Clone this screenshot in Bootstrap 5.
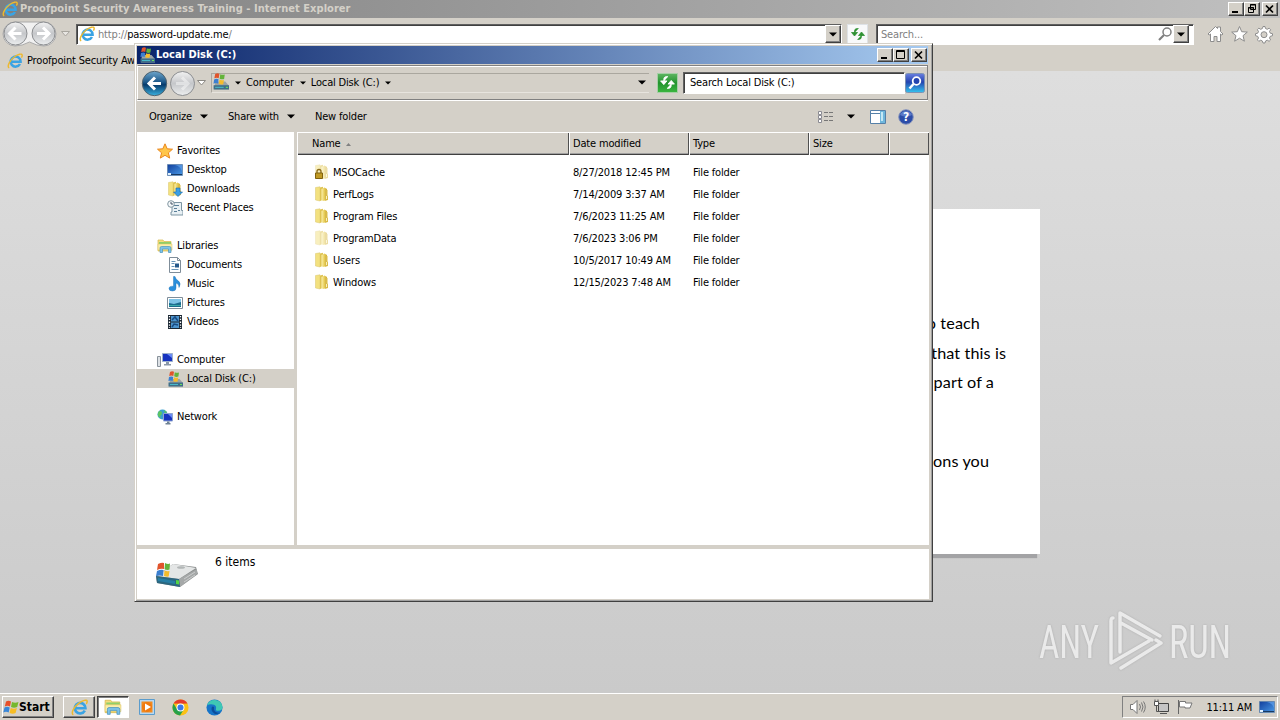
<!DOCTYPE html>
<html lang="en">
<head>
  <meta charset="UTF-8">
  <title>Proofpoint Security Awareness Training</title>
  <link href="https://cdn.jsdelivr.net/npm/bootstrap@5.3.0/dist/css/bootstrap.min.css" rel="stylesheet">
  <style>
    body { font: 11px/14px "DejaVu Sans Condensed", "DejaVu Sans", sans-serif; font-stretch: condensed; letter-spacing: -.17px; color: #000; background: #d4d0c8; height: 720px; white-space: nowrap; }
    svg { flex: none; display: block; }
    .face { background: #d4d0c8; }
    .txt-b { font-weight: bold; letter-spacing: 0; }

    /* classic 3D edges */
    .btn3d { background: #d4d0c8; border: 1px solid; border-color: #fff #404040 #404040 #fff; box-shadow: inset -1px -1px #808080; flex: none; }
    .well { background: #fff; border: 1px solid; border-color: #606060 #fff #fff #606060; box-shadow: inset 1px 1px #404040; }
    .cap { width: 16px; height: 14px; }

    /* browser */
    .ie-title { height: 18px; background: linear-gradient(90deg, #808080, #c0c0c0); color: #d4d0c8; padding-left: 2px; padding-right: 2px; }
    .ie-title .txt-b { margin-left: 2px; letter-spacing: .04px; }
    .ie-nav { height: 32px; padding-left: 2px; }
    .ie-nav span, .ie-tabs span { padding-top: 1px; }
    .ie-nav span span { padding: 0; }
    .ie-address { width: 766px; height: 21px; margin-left: 6px; }
    .ie-search { width: 318px; height: 21px; margin-left: 8px; }
    .ie-tabs { height: 21px; padding-left: 7px; }
    .ie-tabs span { width: 107px; overflow: hidden; }
    .gray { color: #808080; }
    .page-area { background: linear-gradient(#dedede, #cacaca); padding-top: 138px; }
    .lesson { width: 800px; height: 345px; background: #fff; box-shadow: -3px 4px 1px #a3a3a5; font: 16.200px/29.500px Lato, sans-serif; letter-spacing: .1px; padding: 99px 34px 0 0; }
    .lesson .l1 { margin-right: 26px; }
    .lesson .l3 { margin-right: 12px; }
    .lesson .l4 { margin-right: 17px; margin-top: 49.500px; }

    /* explorer window */
    .win { left: 134px; top: 43px; width: 799px; height: 559px; border: 1px solid; border-color: #d4d0c8 #404040 #404040 #d4d0c8; box-shadow: inset 1px 1px #fff, inset -1px -1px #a0a0a0; padding: 2px 3px 2px 2px; }
    .win-title { height: 18px; background: linear-gradient(90deg, #0a246a, #a6caf0); color: #fff; margin-right: 1px; padding: 0 1px 0 2px; }
    .win-nav { height: 35px; margin-top: 1px; margin-right: 1px; border: 1px solid; border-color: #808080 #808080 #808080 #fff; box-shadow: inset 0 1px #fff, 0 1px #fff; padding-left: 3px; }
    .crumbs { width: 438px; height: 20px; border: 1px solid #aaa79f; border-right: 0; border-bottom-color: #e7e4de; margin-left: 5px; }
    .go { width: 21px; height: 20px; margin-left: 8px; background: linear-gradient(#5cb45f, #22932d 50%, #3bb53f); border: 1px solid #a5cfa5; flex: none; }
    .win-search { width: 222px; height: 22px; margin-left: 5px; padding-left: 6px; flex: none; }
    .win-tools { height: 32px; padding: 1px 0 0 12px; }
    .win-main { height: 413px; }
    .side { width: 157px; background: #fff; padding-top: 9px; margin-right: 3px; flex: none; }
    .side .r { height: 19px; display: flex; align-items: center; gap: 4px; padding: 1px 0 0 20px; }
    .side .r svg { margin-top: -1px; }
    .side .s { padding-left: 30px; }
    .files { background: #fff; }
    .cols, .f-row { display: grid; grid-template-columns: 272px 120px 120px 80px 1fr; }
    .cols { height: 23px; margin-bottom: 6px; background: #d4d0c8; border-top: 1px solid #fff; border-bottom: 1px solid #404040; box-shadow: inset 0 -1px #a0a0a0; line-height: 22px; }
    .cols div { border-left: 1px solid #fff; border-right: 1px solid #505050; padding-left: 3px; }
    .cols div:first-child { padding-left: 14px; }
    .f-row { height: 22px; align-items: center; padding-top: 1px; }
    .f-row div { padding-left: 4px; }
    .f-row div:first-child { padding-left: 17px; display: flex; align-items: center; gap: 3px; }
    .f-row svg { margin-top: -2px; }
    .dim { opacity: .5; }
    .details { height: 50px; background: #fff; margin-top: 4px; padding-left: 17px; font-size: 12px; letter-spacing: 0; }

    /* taskbar */
    .task { height: 27px; border-top: 1px solid #fff; padding: 0 2px; }
    .start { width: 52px; height: 22px; }
    .tb { width: 32px; height: 22px; }
    .tb-down { background: #fff; border-color: #404040 #fff #fff #404040; box-shadow: inset 1px 1px #808080; }
    .tray { height: 22px; border: 1px solid; border-color: #808080 #fff #fff #808080; padding: 0 2px 0 6px; }
    .wm { left: 1036px; top: 606px; opacity: .6; filter: drop-shadow(0 0 1px #999); }
  </style>
</head>
<body class="d-flex flex-column overflow-hidden position-relative">

  <svg width="0" height="0" class="position-absolute">
    <defs>
      <linearGradient id="gFold" x1="0" x2="1"><stop offset="0" stop-color="#fbf0ac"/><stop offset=".55" stop-color="#e6cb55"/><stop offset="1" stop-color="#cfab32"/></linearGradient>
      <linearGradient id="gBlue" x1="0" y1="0" x2="0" y2="1"><stop offset="0" stop-color="#6da6cc"/><stop offset=".45" stop-color="#1c5788"/><stop offset=".55" stop-color="#073b6b"/><stop offset="1" stop-color="#39b1e0"/></linearGradient>
      <linearGradient id="gGray" x1="0" y1="0" x2="0" y2="1"><stop offset="0" stop-color="#f2f2f2"/><stop offset=".5" stop-color="#c5c7ca"/><stop offset="1" stop-color="#eceeef"/></linearGradient>
      <linearGradient id="gScr" x1="0" y1="0" x2="1" y2="1"><stop offset="0" stop-color="#123f9c"/><stop offset="1" stop-color="#4a9be8"/></linearGradient>
      <linearGradient id="gSearch" x1="0" y1="0" x2="0" y2="1"><stop offset="0" stop-color="#6a7fe0"/><stop offset=".45" stop-color="#2444b0"/><stop offset="1" stop-color="#35c4ee"/></linearGradient>
    </defs>
    <symbol id="ie" viewBox="0 0 16 16">
      <path d="M13 11A5 5 0 1 1 13.600 8.700H4.500" fill="none" stroke="#3aa3e3" stroke-width="2.500"/>
      <path d="M2.200 14.900C-.6 13.600 3 7 7.500 3.800 11 1.200 15 .2 15.200 2.200c.1 1-.4 1.900-.8 2.500" fill="none" stroke="#edb92e" stroke-width="1.400"/>
    </symbol>
    <symbol id="flag" viewBox="0 0 16 16">
      <path d="M3 2.500Q5.500 1 8 2.500L7 7.500Q4.500 6 1.800 7.500z" fill="#e8502a"/>
      <path d="M9 3q3 1.500 6.500 0l-1.300 5Q11 9.500 8 8z" fill="#75b82d"/>
      <path d="M1.500 8.500Q4 7 6.700 8.500l-1 5Q3 12 .3 13.500z" fill="#3a87d8"/>
      <path d="M7.700 9q3 1.500 6.200.1l-1.300 5q-3 1.400-6-.1z" fill="#f7bd24"/>
    </symbol>
    <symbol id="disk" viewBox="0 0 16 16">
      <path d="M3 8h9.500L16 12v3.500H2z" fill="#9aa3a6"/><path d="M1.500 11.500H16v4H1.500z" fill="#3f6f88"/><path d="M3 13.500h8" stroke="#49b9c9"/><path d="M13 13.500h2" stroke="#6be05a"/>
      <path d="M3 1q2-1.200 4-.2L6.300 5Q4.500 4 2.200 5z" fill="#e0542c"/><path d="M7.800 1.200q2 1 4.200.2l-.6 4.200Q9 6.300 7.200 5.300z" fill="#63b33b"/><path d="M2 6q2.200-1 4.200-.1l-.6 4Q3.600 9 1.400 10z" fill="#3b7fd0"/><path d="M7 6.200q2 1 4.200.3l-.6 4Q8.300 11.300 6.400 10.200z" fill="#f4bb2c"/>
    </symbol>
    <symbol id="fold" viewBox="0 0 16 16">
      <path d="M1.500 1.500L6 .8V15l-4.500-1z" fill="#f3e17f" stroke="#d8c56c" stroke-width=".5"/><path d="M6 1.500L9 .8v13L6 15z" fill="#dfc352"/><path d="M7.500 3l3-1.500L13 3v11l-4 1-1.500-1z" fill="url(#gFold)"/><path d="M11 3.500l2.500.5v5.500l.5.500v4l-3 .800z" fill="#d9bb4a"/><path d="M12.500 10v3" stroke="#f9f0bd"/>
    </symbol>
    <symbol id="lib" viewBox="0 0 16 16">
      <path d="M1 2h5l1 1.500h7V13H1z" fill="#f4dd7e" stroke="#d6b74c" stroke-width=".7"/><path d="M2 4h12v2H2z" fill="#8fcf6a"/><path d="M1 6h14v6H1z" fill="#fbeea9" stroke="#dcc05c" stroke-width=".5"/>
      <path d="M3 14.500V10q0-1.500 1.500-1.500h8Q14 8.500 14 10v4.500h-2.500V11h-6v3.500z" fill="#7dc3e8" stroke="#4a93bd" stroke-width=".7"/>
    </symbol>
    <symbol id="screen" viewBox="0 0 16 16">
      <path d="M.5 2.500h15v11H.5z" fill="url(#gScr)" stroke="#5c7fa8" stroke-width=".7"/><path d="M8 3q5 1 7 6V3z" fill="#6aaaf0" opacity=".6"/><path d="M1 12.500h14" stroke="#173a63"/><path d="M1 11h3v2H1z" fill="#dff0ff"/>
    </symbol>
    <symbol id="note" viewBox="0 0 16 16">
      <path d="M8 .5q.5 3 3.500 4.500 3 2.500.5 6.500.3-3.500-3-4.500V12q0 3-3.500 3T2 12.500Q2 10 6.500 10.200V.5z" fill="#2b8fdc" stroke="#1769ae" stroke-width=".4"/>
    </symbol>
    <symbol id="max" viewBox="0 0 14 12"><path d="M2.500 1.500h8v8h-8zM2 2.500h9" fill="none" stroke="#000"/></symbol>
    <symbol id="x" viewBox="0 0 14 12"><path d="M3 2.500l7 7M10 2.500l-7 7" stroke="#000" stroke-width="1.700"/></symbol>
    <symbol id="min" viewBox="0 0 14 12"><path d="M3 9h6" stroke="#000" stroke-width="2"/></symbol>
    <symbol id="down" viewBox="0 0 8 5"><path d="M0 .5h8l-4 4z"/></symbol>
    <symbol id="left" viewBox="0 0 26 26"><path d="M13.500 7l-6 6 6 6M8 13h11.500" fill="none" stroke="#fff" stroke-width="3"/></symbol>
    <symbol id="right" viewBox="0 0 26 26"><path d="M12.500 7l6 6-6 6M18 13H6.500" fill="none" stroke="#fff" stroke-width="3"/></symbol>
    <symbol id="swap" viewBox="0 0 16 16"><path d="M8.500 2.500Q4.500 2 4.500 5v2M1.500 6.500h6l-3 3.500zM7.500 13.500q4 .5 4-3V9M8.500 9.500h6l-3-3.500z" fill="currentColor" stroke="currentColor" stroke-width=".8"/></symbol>
  </svg>

  <!-- browser caption -->
  <div class="ie-title d-flex align-items-center">
    <svg width="16" height="16"><use href="#ie"/></svg>
    <span class="txt-b"><svg width="0" height="0"></svg>Proofpoint Security Awareness Training - Internet Explorer</span>
    <div class="d-flex ms-auto">
      <div class="btn3d cap"><svg width="14" height="12"><use href="#min"/></svg></div>
      <div class="btn3d cap"><svg width="14" height="12"><path d="M5.500 1.500h5v5h-5zM3.500 4.500h5v5h-5zM5 2h6M3 5h6" fill="#d4d0c8" stroke="#000"/></svg></div>
      <div class="btn3d cap" style="margin-left:2px"><svg width="14" height="12"><use href="#x"/></svg></div>
    </div>
  </div>

  <!-- address bar -->
  <div class="ie-nav face d-flex align-items-center">
    <svg width="55" height="28" viewBox="0 0 55 28">
      <path d="M13 2h29a12 12 0 0 1 0 24q-7 0-14.500-4Q20 26 13 26a12 12 0 0 1 0-24" fill="#f1f1f1" stroke="#aaa"/>
      <circle cx="13.500" cy="13.500" r="11.500" fill="url(#gGray)" stroke="#8b8d90"/><circle cx="41.500" cy="13.500" r="11.500" fill="url(#gGray)" stroke="#8b8d90"/>
      <use href="#left" x="0" y="0.500" width="26" height="26"/><use href="#right" x="28.500" y="0.500" width="26" height="26"/>
    </svg>
    <svg width="9" height="6" class="ms-1"><path d="M.5.500h8l-4 4.500z" fill="#e8e6e2" stroke="#a9a69f"/></svg>
    <div class="ie-address well d-flex align-items-center">
      <svg width="16" height="16" style="margin:0 3px 0 2px"><use href="#ie"/></svg>
      <span><span class="gray">http://</span>password-update.me<span class="gray">/</span></span>
      <div class="btn3d ms-auto d-flex align-items-center justify-content-center" style="width:16px;height:18px"><svg width="8" height="5"><use href="#down"/></svg></div>
    </div>
    <div class="d-flex align-items-center justify-content-center border bg-light" style="width:21px;height:20px;margin-left:5px;color:#2f9233"><svg width="16" height="16"><use href="#swap"/></svg></div>
    <div class="ie-search well d-flex align-items-center">
      <span class="gray ms-1">Search...</span>
      <svg width="16" height="16" class="ms-auto"><circle cx="10" cy="6" r="4" fill="none" stroke="#808080" stroke-width="1.500"/><path d="M7 9l-5 5" stroke="#808080" stroke-width="2.200"/></svg>
      <div class="btn3d d-flex align-items-center justify-content-center me-1" style="width:16px;height:18px"><svg width="8" height="5"><use href="#down"/></svg></div>
    </div>
    <svg width="68" height="20" viewBox="0 0 68 20" style="margin-left:13px">
      <g fill="#fff" stroke="#8d8d8d">
        <path d="M1 10l7.500-7.500L10.500 4.500V3h3v4.500L16 10l-1.200 1-1.300-1v7.500h-3.500v-5H7v5H3.500V10l-1.300 1z"/>
        <path d="M32.500 2.500l2.200 5.200 5.600.4-4.300 3.600 1.400 5.500-4.900-3-4.900 3 1.400-5.500-4.300-3.600 5.600-.4z"/>
        <path d="M56 2.500h2l.5 2 1.800.8 1.800-1.100 1.500 1.500L62.500 7.500l.8 1.700 2.200.5v2l-2.200.6-.8 1.700 1.100 1.900-1.500 1.400-1.800-1.100-1.800.8-.5 2h-2l-.6-2-1.700-.8-1.900 1.100-1.400-1.400L51.500 14l-.8-1.700-2.200-.6v-2l2.200-.5.8-1.700-1.100-1.800 1.400-1.500L53.700 5.300l1.700-.8z"/><circle cx="57" cy="10.700" r="3" fill="#d4d0c8"/>
      </g>
    </svg>
  </div>

  <div class="ie-tabs face d-flex align-items-center">
    <svg width="16" height="16" style="margin-right:4px"><use href="#ie"/></svg>
    <span>Proofpoint Security Aw</span>
  </div>

  <!-- web page behind the window -->
  <div class="page-area flex-grow-1 overflow-hidden">
    <div class="lesson mx-auto text-end">
      <div class="l1">to teach</div>
      <div>that this is</div>
      <div class="l3">part of a</div>
      <div class="l4">actions you</div>
    </div>
  </div>

  <!-- taskbar -->
  <div class="task face d-flex align-items-center">
    <div class="btn3d start d-flex align-items-center"><svg width="16" height="16"><use href="#flag"/></svg><span class="txt-b" style="font-size:12px">Start</span></div>
    <div class="btn3d tb d-flex align-items-center justify-content-center" style="margin-left:9px"><svg width="17" height="17"><use href="#ie"/></svg></div>
    <div class="btn3d tb tb-down d-flex align-items-center justify-content-center" style="margin-left:2px"><svg width="18" height="18"><use href="#lib"/></svg></div>
    <svg width="16" height="16" style="margin-left:10px"><path d="M.5.500h15v15H.5z" fill="#b7d8f2" stroke="#5b9ccc"/><path d="M2.500 2.500h11v11h-11z" fill="#f38b1f"/><circle cx="8" cy="8" r="5" fill="#f07a10"/><path d="M6 4.500l6 3.500-6 3.500z" fill="#fff"/></svg>
    <svg width="17" height="17" viewBox="0 0 18 18" style="margin-left:17px"><circle cx="9" cy="9" r="8.500" fill="#fbc116"/><path d="M1.600 4.800A8.500 8.500 0 0 1 16.400 4.800L9 5z" fill="#e33b2e"/><path d="M1.600 4.800A8.500 8.500 0 0 0 8.500 17.500L12.500 11 5.500 11z" fill="#26a14b"/><circle cx="9" cy="9" r="4.200" fill="#fff"/><circle cx="9" cy="9" r="3.200" fill="#3a79e8"/></svg>
    <svg width="17" height="17" viewBox="0 0 18 18" style="margin-left:17px"><circle cx="9" cy="9" r="8.500" fill="#1674c8"/><path d="M1 7A8.500 8.500 0 0 1 17.500 8.500q0 4-4.500 4-3 0-2.500-2 1-3-2-4.500Q4 4.500 1 7z" fill="#3fc8b4"/><path d="M6 9q-1 4 3 6.500 3 1 6-1-3 .5-5-1t-1.500-5Q7 7 6 9" fill="#0c4d9a"/></svg>
    <div class="tray d-flex align-items-center ms-auto">
      <svg width="17" height="16"><path d="M1.500 5.500H4l4-4v13l-4-4H1.500z" fill="#fff" stroke="#777"/><path d="M10.500 5q2 3 0 6M12.500 3.500q3 4.500 0 9M14.500 2.500q3.500 5.500 0 11" fill="none" stroke="#777"/></svg>
      <svg width="17" height="16" style="margin-left:7px"><path d="M5.500 4.500h10v8h-10z" fill="#c5c5c5" stroke="#444"/><path d="M7 14.500h7M3.500 7v5.500h4M2 .5v2M5 .5v2" fill="none" stroke="#555"/><path d="M1.500 2.500h4v4h-4z" fill="#fff" stroke="#555"/></svg>
      <svg width="17" height="16" style="margin-left:7px"><path d="M1.500 1v14" stroke="#666"/><path d="M2.500 2.500h6v1.500h6.500l-2 5H8V8H2.500z" fill="#fff" stroke="#777"/></svg>
      <span style="margin-left:12px;padding-top:1px">11:11 AM</span>
      <svg width="16" height="16" style="margin-left:7px"><use href="#screen"/></svg>
    </div>
  </div>

  <!-- explorer window -->
  <div class="win face position-absolute d-flex flex-column">
    <div class="win-title d-flex align-items-center">
      <svg width="16" height="16"><use href="#disk"/></svg>
      <span class="txt-b" style="margin-left:1px">Local Disk (C:)</span>
      <div class="d-flex ms-auto">
        <div class="btn3d cap"><svg width="14" height="12"><use href="#min"/></svg></div>
        <div class="btn3d cap"><svg width="14" height="12"><use href="#max"/></svg></div>
        <div class="btn3d cap" style="margin-left:2px"><svg width="14" height="12"><use href="#x"/></svg></div>
      </div>
    </div>

    <div class="win-nav d-flex align-items-center">
      <svg width="56" height="28" viewBox="0 0 56 28">
        <circle cx="13.500" cy="14.500" r="12.200" fill="url(#gBlue)" stroke="#51636e"/><circle cx="41.500" cy="14.500" r="12" fill="url(#gGray)" stroke="#8b8d90"/>
        <use href="#left" x="0.500" y="1.500" width="26" height="26"/><use href="#right" x="28.500" y="1.500" width="26" height="26" opacity=".45"/>
      </svg>
      <svg width="9" height="6"><path d="M.5.500h8l-4 4.500z" fill="#fff" stroke="#8c8a85"/></svg>
      <div class="crumbs d-flex align-items-center flex-shrink-0">
        <svg width="17" height="17" style="margin-top:-2px"><use href="#disk"/></svg>
        <svg width="6" height="4" style="margin-left:6px"><use href="#down"/></svg><span style="margin-left:5px">Computer</span>
        <svg width="6" height="4" style="margin-left:6px"><use href="#down"/></svg><span style="margin-left:5px">Local Disk (C:)</span>
        <svg width="6" height="4" style="margin-left:6px"><use href="#down"/></svg>
        <svg width="8" height="5" class="ms-auto" style="margin-right:3px"><use href="#down"/></svg>
      </div>
      <div class="go text-white d-flex align-items-center justify-content-center"><svg width="17" height="17"><use href="#swap"/></svg></div>
      <div class="win-search well d-flex align-items-center">Search Local Disk (C:)</div>
      <svg width="20" height="20"><rect x=".5" y=".5" width="19" height="19" rx="2" fill="url(#gSearch)" stroke="#7d92b4"/><circle cx="11.500" cy="8" r="3.800" fill="#2444b0" stroke="#fff" stroke-width="1.800"/><path d="M8.500 11l-4 4.500" stroke="#fff" stroke-width="2.500"/></svg>
    </div>

    <div class="win-tools d-flex align-items-center">
      <span>Organize</span><svg width="8" height="5" style="margin-left:8px"><use href="#down"/></svg>
      <span style="margin-left:20px">Share with</span><svg width="8" height="5" style="margin-left:8px"><use href="#down"/></svg>
      <span style="margin-left:20px">New folder</span>
      <svg width="16" height="14" class="ms-auto"><path d="M.5 1.500h3v3h-3zM.5 5.500h3v3h-3zM.5 9.500h3v3h-3z" fill="#fff" stroke="#8b8b93"/><path d="M6 2.500h4m1 0h4M6 6.500h4m1 0h4M6 10.500h4m1 0h4" stroke="#777"/></svg>
      <svg width="8" height="5" style="margin-left:13px"><use href="#down"/></svg>
      <svg width="16" height="14" style="margin-left:15px"><path d="M.5.500h15v13H.5z" fill="#fff" stroke="#5580a8"/><path d="M1 3.500h9" stroke="#5580a8"/><path d="M10 1h5v12h-5z" fill="#6fb7dc"/><path d="M12 2v9" stroke="#c5e8f5" stroke-width="2"/></svg>
      <svg width="16" height="16" style="margin-left:12px;margin-right:15px"><circle cx="8" cy="8" r="7.300" fill="#2c4da8" stroke="#8996bd"/><path d="M2 6a6.500 6.500 0 0 1 12 0q-6 3-12 0" fill="#7998dc" opacity=".6"/><text x="8" y="12.300" text-anchor="middle" fill="#fff" font-size="12" font-weight="bold">?</text></svg>
    </div>

    <div class="win-main d-flex">
      <div class="side">
        <div class="r"><svg width="16" height="16"><path d="M8 .8l2.200 5 5.300.4-4.100 3.600 1.300 5.300L8 12.300l-4.700 2.800 1.300-5.300L.5 6.200l5.300-.4z" fill="#ffc64a" stroke="#ea861c"/></svg>Favorites</div>
        <div class="r s"><svg width="16" height="16"><use href="#screen"/></svg>Desktop</div>
        <div class="r s"><svg width="16" height="16"><use href="#fold"/><path d="M9 7h4v4h2.500L11 15.500 6.500 11H9z" fill="#3a9ee5" stroke="#1a68a8" stroke-width=".6"/></svg>Downloads</div>
        <div class="r s"><svg width="16" height="16"><path d="M5 2.500h9.500v8H16v4.500H4V12h1z" fill="#e8f0f4" stroke="#7c95a3"/><path d="M7 5.500h5M7 8.500h3m1 2h2M7 11.500h3" stroke="#5a7f98"/><circle cx="4" cy="4" r="3.300" fill="#f5f8fa" stroke="#8296a0"/><path d="M4 2v2h2" fill="none" stroke="#456"/></svg>Recent Places</div>
        <div class="r"></div>
        <div class="r"><svg width="16" height="16"><use href="#lib"/></svg>Libraries</div>
        <div class="r s"><svg width="16" height="16"><path d="M2.500.5h8l3 3v12h-11z" fill="#fff" stroke="#7f8d99"/><path d="M10.500.5v3h3" fill="none" stroke="#7f8d99"/><path d="M4.500 4.500h4M4.500 6.500h3M4.500 9.500h3M4.500 12.500h7" stroke="#6a95b8"/><path d="M8 6.500h4v4H8z" fill="#27598a"/></svg>Documents</div>
        <div class="r s"><svg width="16" height="16"><use href="#note"/></svg>Music</div>
        <div class="r s"><svg width="16" height="16"><path d="M.5 2.500h15v11H.5z" fill="#fff" stroke="#7f8d99"/><path d="M2 4h12v8H2z" fill="#7ec3e6"/><path d="M2 8l5 1 7-2v5H2z" fill="#1c6c8e"/><path d="M2 10.500h12" stroke="#3cabaa"/></svg>Pictures</div>
        <div class="r s"><svg width="16" height="16"><path d="M1 1h14v14H1z" fill="#1b2733"/><path d="M4 2h8v5.500H4zM4 8.500h8V14H4z" fill="#4d94cc"/><path d="M5 6l3-3 3 4M5 13l2-3 4 1" fill="none" stroke="#184b83" stroke-width="1.500"/><path d="M2.500 2v12M13.500 2v12" stroke="#fff" stroke-width="1.300" stroke-dasharray="1.300 1.500"/></svg>Videos</div>
        <div class="r"></div>
        <div class="r"><svg width="16" height="16"><path d="M.5 4.500h3v10h-3z" fill="#dde1e5" stroke="#89929b"/><path d="M5.500 1.500h10v8h-10z" fill="#1733c0" stroke="#9db0cc"/><path d="M10 2h5v4z" fill="#6a8bf5"/><path d="M9 10h3v2H9zM7 12h7v1.500H7z" fill="#8a98a8"/></svg>Computer</div>
        <div class="r s face"><svg width="16" height="16"><use href="#disk"/></svg>Local Disk (C:)</div>
        <div class="r"></div>
        <div class="r"><svg width="16" height="16"><circle cx="5.500" cy="5.500" r="5" fill="#3ba0cf"/><path d="M2 2q3 0 3 2T3 7l1 2Q0 8 1 4zM7 1l3 2-2 2z" fill="#5cc562"/><path d="M6.500 4.500h9v7.500h-9z" fill="#1733c0" stroke="#8fa5d0"/><path d="M11 5h4v4z" fill="#6a8bf5"/><path d="M10 12.500h2.500V14H10zM8.500 14h5v1.500h-5z" fill="#6f8294"/></svg>Network</div>
      </div>

      <div class="files flex-grow-1">
        <div class="cols">
          <div class="d-flex align-items-center">Name<svg width="5" height="3" style="margin-left:5px"><path d="M0 3h5L2.500 0z" fill="#808080"/></svg></div>
          <div>Date modified</div><div>Type</div><div>Size</div><div></div>
        </div>
        <div class="f-row"><div><svg width="16" height="16"><use href="#fold" class="dim"/><path d="M3 10V7.500q0-2 2-2t2 2V10" fill="none" stroke="#8c6c1b" stroke-width="1.300"/><path d="M1.500 9h7v5.500h-7z" fill="#c19a24" stroke="#80620f"/></svg>MSOCache</div><div>8/27/2018 12:45 PM</div><div>File folder</div></div>
        <div class="f-row"><div><svg width="16" height="16"><use href="#fold"/></svg>PerfLogs</div><div>7/14/2009 3:37 AM</div><div>File folder</div></div>
        <div class="f-row"><div><svg width="16" height="16"><use href="#fold"/></svg>Program Files</div><div>7/6/2023 11:25 AM</div><div>File folder</div></div>
        <div class="f-row"><div><svg width="16" height="16" class="dim"><use href="#fold"/></svg>ProgramData</div><div>7/6/2023 3:06 PM</div><div>File folder</div></div>
        <div class="f-row"><div><svg width="16" height="16"><use href="#fold"/></svg>Users</div><div>10/5/2017 10:49 AM</div><div>File folder</div></div>
        <div class="f-row"><div><svg width="16" height="16"><use href="#fold"/></svg>Windows</div><div>12/15/2023 7:48 AM</div><div>File folder</div></div>
      </div>
    </div>

    <div class="details d-flex">
      <svg width="46" height="30" viewBox="0 0 46 30" style="margin-top:11px">
        <path d="M2 16L19 4l23 3 2 7-18 13L3 23z" fill="#8d9090"/><path d="M3 16L19 4l23 4-17 11z" fill="#e4e6e6"/><path d="M25 19l18-10v5L26 27z" fill="#a5a8a8"/><path d="M2 16l23 3 1 8L3 23z" fill="#2c677f"/><path d="M4 18l17 3v3L4 21z" fill="#267fa6"/><path d="M22 20l3 .500v4L22 24z" fill="#54d544"/><ellipse cx="27" cy="7.500" rx="4" ry="1.300" fill="#b3b7b7"/><path d="M30 19l11-7M30 22l11-7" stroke="#d4d6d6" stroke-width=".8"/>
        <path d="M4 4q4-2 6-1v6q-3-1-7 1z" fill="#e0542c"/><path d="M11 3q3 1.500 5 .500l-.5 6q-2 1-5-.500z" fill="#63b33b"/><path d="M3 11q4-2 6.500-1L9 16q-3-1-7 0z" fill="#3b7fd0"/><path d="M10.500 10.500q2.500 1 5 .500l-.8 5.500q-2 .5-4.700-.5z" fill="#f4bb2c"/>
      </svg>
      <span style="margin:6px 0 0 15px">6 items</span>
    </div>
  </div>

  <svg class="wm position-absolute" width="200" height="70" viewBox="-2 -2 200 70">
    <g fill="#fff" font-family="Roboto" font-size="46">
      <text x="1" y="50" textLength="60" lengthAdjust="spacingAndGlyphs">ANY</text>
      <text x="131" y="50" textLength="62" lengthAdjust="spacingAndGlyphs">RUN</text>
    </g>
    <g fill="none" stroke="#fff" stroke-width="3.500" stroke-linejoin="round" stroke-linecap="round">
      <path d="M82 44V5l40 23M83 15l31 17"/><path d="M75 10c-2 0-2 1-2 3v42l38-22M83 60l40-25-5-3"/>
    </g>
  </svg>

  <script src="https://cdn.jsdelivr.net/npm/bootstrap@5.3.0/dist/js/bootstrap.bundle.min.js"></script>
</body>
</html>
